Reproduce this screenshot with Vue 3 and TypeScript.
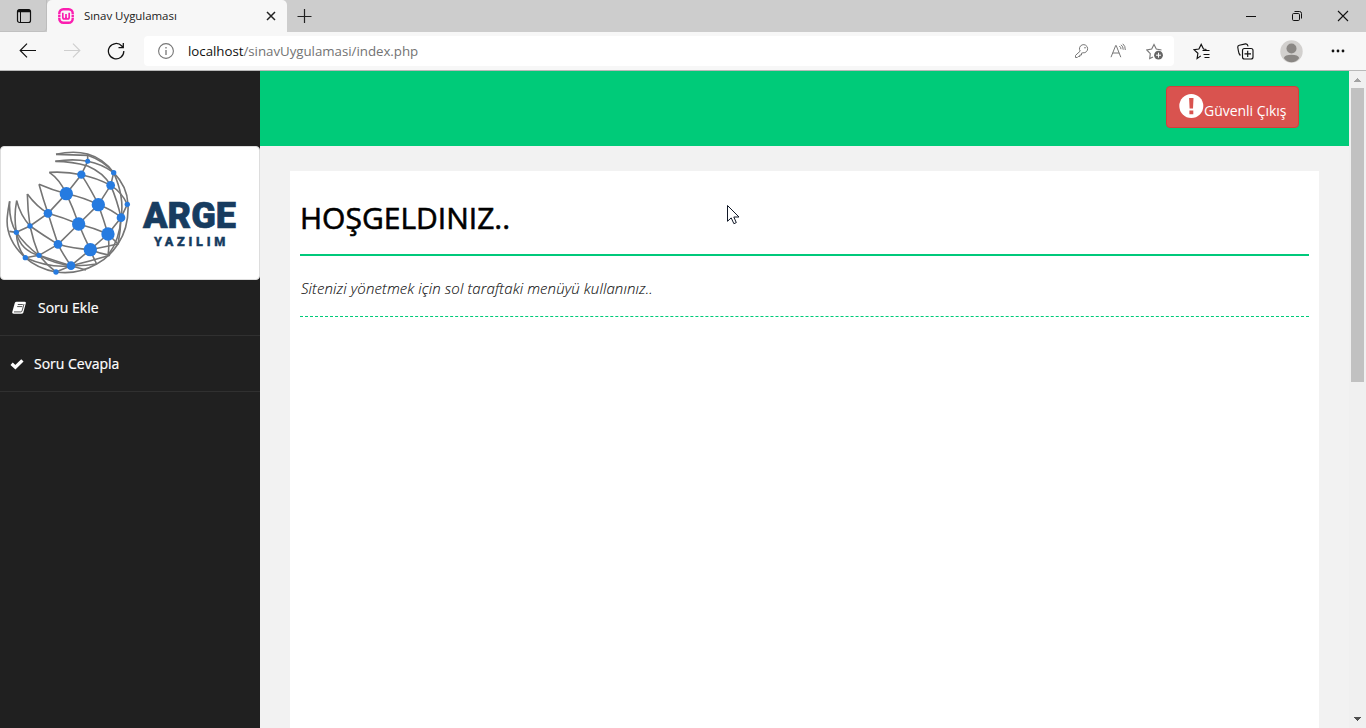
<script setup lang="ts">
interface GlobeNode { x: number; y: number; r: number }

const nodes: GlobeNode[] = [
  { x: 263, y: 52, r: 7.5 }, { x: 341, y: 86, r: 8 }, { x: 244, y: 92, r: 12.5 },
  { x: 332, y: 124, r: 13 }, { x: 199, y: 149, r: 20 }, { x: 295, y: 182, r: 20 },
  { x: 382, y: 181, r: 8 }, { x: 144, y: 208, r: 13 }, { x: 363, y: 221, r: 13 },
  { x: 236, y: 240, r: 20 }, { x: 324, y: 270, r: 20 }, { x: 90, y: 246, r: 8 },
  { x: 49, y: 265, r: 8 }, { x: 174, y: 301, r: 13 }, { x: 271, y: 317, r: 20 },
  { x: 117, y: 334, r: 8 }, { x: 76, y: 341, r: 8 }, { x: 213, y: 365, r: 13 },
  { x: 168, y: 384, r: 8 },
]

const meshLines: string[] = [
  // outer rim
  'M168 31 Q220 19 263 30 Q311 44 341 86 Q382 128 384 181 Q387 250 354 300 Q326 342 290 360 Q232 393 168 384',
  'M168 384 Q112 374 76 341 Q15 285 22 218 Q24 195 29 172',
  'M29 172 Q26 230 49 265 Q62 320 117 334 Q160 358 213 365 Q255 366 290 360',
  'M168 31 Q218 32 263 34 Q310 50 341 86',
  // latitude curves
  'M166 52 Q220 43 263 52 Q305 60 341 86',
  'M166 52 Q217 52 263 66 Q310 86 332 124',
  'M148 85 Q200 82 244 92 Q292 102 332 124 Q366 145 382 181',
  'M148 85 Q178 105 199 149 Q252 160 295 182 Q340 198 363 221',
  'M117 121 Q155 138 199 149',
  'M117 121 Q129 165 144 208 Q187 220 236 240 Q282 252 324 270 L354 300',
  'M82 150 Q110 188 144 208',
  'M82 150 Q83 200 90 246 Q130 274 174 301 Q220 314 271 317 Q302 329 330 334',
  'M50 170 Q61 214 90 246',
  'M50 170 Q41 218 49 265 Q76 304 117 334',
  'M28 262 L49 265 Q50 310 76 341',
  // longitude curves
  'M263 30 L263 52 L244 92 L199 149 L144 208 L90 246 L49 265',
  'M341 86 L332 124 L295 182 L236 240 L174 301 L117 334 L76 341',
  'M382 181 L363 221 L324 270 L271 317 L213 365 L168 384',
  'M341 86 Q374 160 363 221 Q360 285 324 334',
  'M244 92 Q275 140 295 182 Q311 226 324 270 Q329 300 324 334',
  'M332 124 Q352 170 363 221 Q362 260 354 300 L271 317',
  'M199 149 Q220 194 236 240 Q253 281 271 317 Q279 339 290 360',
  'M144 208 Q158 253 174 301 Q191 335 213 365 L258 378',
  'M90 246 Q100 293 117 334 Q139 362 168 384',
  'M117 334 Q168 352 213 365 Q270 352 330 334',
  'M76 341 Q150 373 213 365',
]
</script>

<template>
  <div class="window">
    <div class="tabbar">
      <div class="tab-actions">
        <svg width="16" height="16" viewBox="0 0 16 16" fill="none" stroke="#111">
          <rect x="1.5" y="1.5" width="13" height="13" rx="2" stroke-width="1.2" />
          <path d="M1.5 3.5H14.5M2 2.5H14" stroke-width="1.7" /><path d="M4.5 4V14.5" />
        </svg>
      </div>
      <div class="tab">
        <svg class="favicon" width="16" height="16" viewBox="0 0 16 16" fill="none" stroke="#fb1eb0">
          <rect x="1.3" y="1.3" width="13.4" height="13.4" rx="4" stroke-width="2.4" />
          <path d="M4.8 4.7V9Q4.8 11 6.3 11Q8 11 8 9V6V9Q8 11 9.7 11Q11.2 11 11.2 9V4.7" stroke-width="1.7" />
          <path d="M0 6.5H4M12 6.5H16M0 9.5H3M13 9.5H16" stroke="#fff" stroke-width=".6" />
        </svg>
        <span class="tab-title">Sınav Uygulaması</span>
        <svg class="tab-close" width="10" height="10" viewBox="0 0 10 10" fill="none" stroke="#222" stroke-width="1.5"><path d="M1 1L9 9M9 1L1 9" /></svg>
      </div>
      <svg class="new-tab" width="15" height="14" viewBox="0 0 15 14" fill="none" stroke="#222"><path d="M7.5 0V14M.5 7.5H14.5" stroke-width="1.2" /></svg>
      <div class="window-controls">
        <svg width="12" height="12" viewBox="0 0 12 12" fill="none" stroke="#111"><path d="M1 6.5H11" /></svg>
        <svg width="12" height="12" viewBox="0 0 12 12" fill="none" stroke="#111"><rect x="1.5" y="3.5" width="7" height="7" rx="1.2" /><path d="M3.5 1.5H8.5Q10.5 1.5 10.5 3.5V8.5" /></svg>
        <svg width="12" height="12" viewBox="0 0 12 12" fill="none" stroke="#111" stroke-width="1.1"><path d="M1 1L11 11M11 1L1 11" /></svg>
      </div>
    </div>

    <div class="toolbar">
      <svg class="back" width="18" height="16" viewBox="0 0 18 16" fill="none" stroke="#111" stroke-width="1.2"><path d="M17 7.5H1.5M8 .7L1.2 7.5L8 14.3" /></svg>
      <svg class="forward" width="18" height="16" viewBox="0 0 18 16" fill="none" stroke="#cfcfcf" stroke-width="1.2"><path d="M1 7.5H16.5M10 .7L16.8 7.5L10 14.3" /></svg>
      <svg class="reload" width="18" height="18" viewBox="0 0 18 18" fill="none" stroke="#111" stroke-width="1.25"><path d="M16.8 9A7.7 7.7 0 1 1 14.8 4L16 5.4M16.3 1V5.5H11.5" /></svg>
      <div class="address">
        <svg class="info" width="16" height="16" viewBox="0 0 16 16" fill="none" stroke="#767676"><circle cx="8" cy="8" r="7.4" stroke-width="1.1" /><path d="M8 7V12M8 4V5.5" stroke-width="1.3" /></svg>
        <span class="url"><span class="host">localhost</span>/sinavUygulamasi/index.php</span>
        <div class="address-icons">
          <svg width="16" height="16" viewBox="0 0 16 16" fill="none" stroke="#777"><path d="M6.2 8.1A4.1 4.1 0 1 1 9 9.8L7.5 10.2V12H5.8V13.5H4.2L3.3 14.5H1.5V12.4Z" /><circle cx="11" cy="4.8" r=".8" fill="#777" stroke="none" /></svg>
          <svg width="16" height="16" viewBox="0 0 16 16" fill="none" stroke="#777"><path d="M1 14.2L5.7 2.5H6.2L10.8 14.2M2.7 10H9.2M9.3 3Q11 4 11 6.2M11 1.8Q13.3 3.4 13.2 6.7M12.8 .8Q15.5 3 15.3 7" /></svg>
          <svg width="18" height="17" viewBox="0 0 18 17" fill="none" stroke="#777">
            <path d="M7 14L3.7 15.5L4.3 10.6L.8 7L5.7 6.1L8 1.5L10.3 6.1L15.5 7" stroke-width="1.1" />
            <circle cx="12.5" cy="12.2" r="4.4" fill="#666" stroke="none" /><path d="M10 12.2H15M12.5 9.7V14.7" stroke="#fff" />
          </svg>
        </div>
      </div>
      <div class="browser-icons">
        <svg class="favorites" width="17" height="17" viewBox="0 0 17 17" fill="none" stroke="#111" stroke-width="1.15"><path d="M7.8 12.9L4.1 15.5L4.9 10.3L1 6.7L5.9 6L8.2 1.4L10.5 6L13.5 6.5M9.5 7.5H16.5M10.5 11.5H16.5M11.5 14.5H16.5" /></svg>
        <svg class="collections" width="17" height="17" viewBox="0 0 17 17" fill="none" stroke="#111" stroke-width="1.15"><path d="M3.4 12.5Q1.7 10.8 1.4 8L.8 4.5Q.5 2.8 2.3 2.3L8.5 .9Q10.5 .6 11.1 3.3" /><rect x="5.5" y="5.5" width="10.5" height="10.5" rx="2" /><path d="M10.7 7.7V14M7.5 10.8H14" /></svg>
        <svg class="profile" width="23" height="23" viewBox="0 0 23 23"><circle cx="11.5" cy="11.5" r="11.2" fill="#d2d0ce" /><circle cx="11.5" cy="8.5" r="5" fill="#8a8784" /><path d="M3.8 18Q5 14.7 11.5 14.7Q18 14.7 19.2 18Q16 22.3 11.5 22.3Q7 22.3 3.8 18Z" fill="#8a8784" /></svg>
        <svg class="more" width="14" height="4" viewBox="0 0 14 4" fill="#111"><circle cx="2" cy="2" r="1.4" /><circle cx="7" cy="2" r="1.4" /><circle cx="12" cy="2" r="1.4" /></svg>
      </div>
    </div>

    <div class="viewport">
      <aside class="sidebar">
        <div class="sidebar-top"></div>
        <div class="brand">
          <svg width="258" height="132" viewBox="3 9 774 396">
            <g fill="none" stroke="#757575" stroke-width="4.8" stroke-linejoin="round">
              <path v-for="d in meshLines" :key="d" :d="d" />
            </g>
            <circle v-for="(n, i) in nodes" :key="i" :cx="n.x" :cy="n.y" :r="n.r" fill="#267be0" />
            <text class="brand-name" x="429" y="251" textLength="279" lengthAdjust="spacingAndGlyphs">ARGE</text>
            <text class="brand-sub" x="462" y="307" textLength="214">YAZILIM</text>
          </svg>
        </div>
        <a class="menu-item book">
          <svg width="15" height="14" viewBox="0 0 15 14"><path d="M4.5 .7H12.6Q14.2 .8 13.8 2.3L11.4 11.2Q10.9 12.8 9.4 12.8H2Q-.2 12.8 .4 10.6L2.8 2Q3.2 .7 4.5 .7Z" fill="#fff" /><path d="M5.8 3.5H10.8M5.2 5.6H10.2M2 10.9H8.9Q9.7 10.9 10 10L12 3" fill="none" stroke="#202020" stroke-width=".75" /></svg>
          <span>Soru Ekle</span>
        </a>
        <a class="menu-item check">
          <svg width="14" height="12" viewBox="0 0 14 12"><path d="M1.6 5.8L5.4 9.3L12.4 2.4" fill="none" stroke="#fff" stroke-width="3.3" /></svg>
          <span>Soru Cevapla</span>
        </a>
      </aside>

      <main class="main">
        <header class="topbar">
          <button class="logout">
            <svg width="25" height="25" viewBox="0 0 25 25"><circle cx="12.3" cy="12" r="12" fill="#fff" /><path d="M10.1 4H14.5L14 14.5H10.6ZM10.4 16.5H14.3V20.2H10.4Z" fill="#d9534f" /></svg>
            <span>Güvenli Çıkış</span>
          </button>
        </header>
        <section class="panel">
          <h1>HOŞGELDINIZ..</h1>
          <p>Sitenizi yönetmek için sol taraftaki menüyü kullanınız..</p>
        </section>
      </main>

      <div class="scrollbar">
        <svg width="17" height="17" viewBox="0 0 17 17" shape-rendering="crispEdges"><path d="M5 11L8.5 7L12 11Z" fill="#a3a3a3" /></svg>
        <div class="thumb"></div>
        <svg class="down" width="17" height="17" viewBox="0 0 17 17" shape-rendering="crispEdges"><path d="M5 6L8.5 10L12 6Z" fill="#505050" /></svg>
      </div>
    </div>

    <svg class="cursor" width="13" height="20" viewBox="0 0 13 20"><path d="M.5 .5V16.3L4.2 12.9L6.9 18.7L9.3 17.6L6.8 12H12Z" fill="#fff" stroke="#111827" stroke-width="1" /></svg>
  </div>
</template>

<style>
html, body { margin: 0; overflow: hidden; }
</style>

<style scoped>
.window { position: relative; box-sizing: border-box; width: 1366px; height: 728px; overflow: hidden; display: flex; flex-direction: column; background: #f2f2f2; font-family: "Open Sans", "Noto Sans", sans-serif; }
svg { display: block; flex: none; }
.tabbar { height: 32px; flex: none; display: flex; align-items: center; background: #cdcdcd; }
.tab-actions { width: 47px; height: 32px; box-sizing: border-box; padding: 8px 0 0 16px; border-bottom: 1px solid #c0c0c0; border-right: 1px solid #bdbdbd; border-radius: 0 0 4px 0; }
.tab { width: 240px; height: 32px; display: flex; align-items: center; background: #f7f7f7; border-radius: 5px 5px 0 0; }
.favicon { margin-left: 11px; }
.tab-title { width: 170px; margin-left: 10px; font-size: 11.5px; line-height: 16px; color: #222; white-space: nowrap; letter-spacing: -0.05px; }
.tab-close { margin-left: 12px; }
.new-tab { margin-left: 10px; }
.window-controls { display: flex; gap: 34px; margin-left: auto; margin-right: 17px; }
.toolbar { height: 39px; flex: none; box-sizing: border-box; display: flex; align-items: center; background: #f7f7f7; border-bottom: 1px solid #b9b9b9; }
.back { margin-left: 19px; }
.forward { margin-left: 26px; }
.reload { margin-left: 26px; }
.address { width: 1030px; height: 30px; margin-left: 19px; display: flex; align-items: center; background: #fff; border-radius: 4px; }
.info { margin-left: 14px; }
.url { margin-left: 14px; font-size: 13.3px; letter-spacing: -0.03px; line-height: 20px; color: #737373; white-space: nowrap; }
.host { color: #111; }
.address-icons { display: flex; align-items: center; gap: 20px; margin-left: auto; margin-right: 10px; }
.browser-icons { flex: 1; display: flex; align-items: center; }
.favorites { margin-left: 19px; }
.collections { margin-left: 27px; }
.profile { margin-left: 26px; }
.more { margin-left: 28px; }
.viewport { flex: 1; min-height: 0; display: flex; }
.sidebar { width: 260px; flex: none; background: #202020; }
.sidebar-top { height: 75px; }
.brand { box-sizing: border-box; width: 260px; height: 134px; border: 1px solid #ddd; border-radius: 4px; background: #fff; overflow: hidden; }
.brand-name { font: 900 110px Roboto, sans-serif; fill: #173c60; stroke: #173c60; stroke-width: 2; }
.brand-sub { font: 900 38px Roboto, sans-serif; fill: #173c60; stroke: #173c60; stroke-width: 1; }
.menu-item { height: 56px; box-sizing: border-box; display: flex; align-items: center; border-bottom: 1px solid #303030; color: #fff; font-size: 14px; line-height: 20px; -webkit-text-stroke: 0.2px #fff; }
.book { padding-left: 12px; gap: 11px; }
.check { padding-left: 10px; gap: 10px; }
.main { flex: 1; min-width: 0; display: flex; flex-direction: column; background: #f2f2f2; }
.topbar { height: 75px; flex: none; box-sizing: border-box; padding: 15px 50px 0 0; display: flex; justify-content: flex-end; background: #00cb79; }
.logout { width: 133px; height: 42px; box-sizing: border-box; display: flex; align-items: flex-start; padding: 7px 0 0 12px; border: 1px solid #d43f3a; border-radius: 4px; background: #d9534f; color: #fff; font-family: inherit; font-size: 14px; letter-spacing: -0.03px; line-height: 20px; white-space: nowrap; }
.logout span { margin-top: 7px; }
.panel { flex: 1; margin: 25px 30px 0; padding: 0 10px; background: #fff; }
h1 { height: 85px; box-sizing: border-box; margin: 0; padding: 27px 0 0; border-bottom: 2px solid #00c97b; font-size: 30px; line-height: 40px; font-weight: 500; color: #000; white-space: nowrap; -webkit-text-stroke: 0.6px #000; }
p { height: 61px; box-sizing: border-box; margin: 0; padding: 22px 0 0 1px; border-bottom: 1px dashed #00cb79; font-size: 15px; letter-spacing: 0.11px; line-height: 20px; font-style: italic; font-weight: 300; color: #111; -webkit-text-stroke: 0.1px #111; }
.scrollbar { width: 17px; flex: none; display: flex; flex-direction: column; background: #f0f0f0; }
.thumb { width: 13px; height: 294px; margin-left: 2px; background: #c1c1c1; }
.down { margin-top: auto; }
.cursor { position: absolute; left: 727px; top: 205px; }
</style>
